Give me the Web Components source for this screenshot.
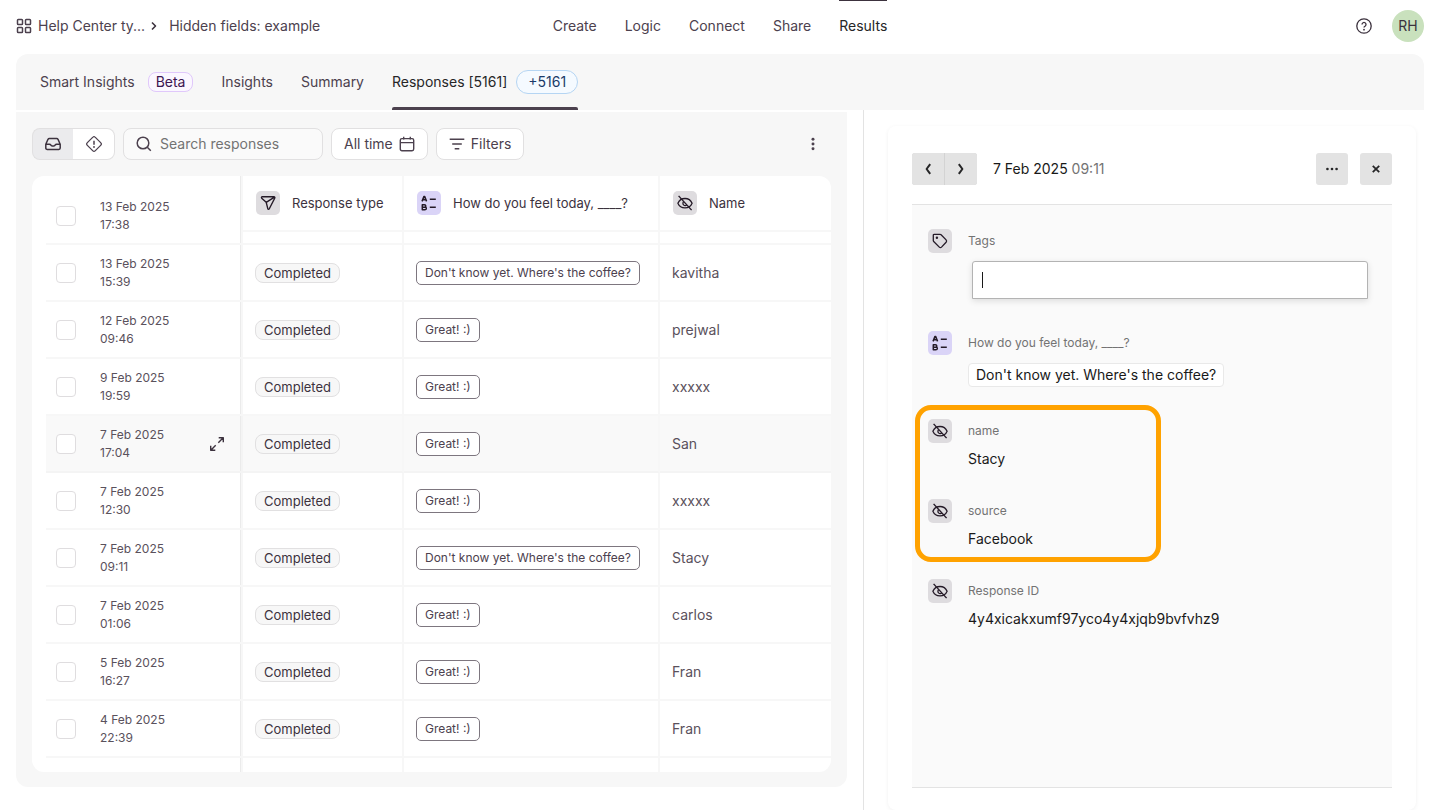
<!DOCTYPE html>
<html lang="en">
<head>
<meta charset="utf-8">
<meta name="viewport" content="width=device-width, initial-scale=1">
<title>Hidden fields: example – Responses</title>
<style>
  body {
    margin: 0;
    background: #fff;
    color: #5a515c;
    font: 14px/20px Inter, "Liberation Sans", sans-serif;
  }
</style>
</head>
<body>
<results-page></results-page>

<script>
const ICONS = {
  grid: '<g stroke-width="1.5"><rect x="1.5" y="1.5" width="5" height="5" rx=".8"/><rect x="9.5" y="1.5" width="5" height="5" rx=".8"/><rect x="1.5" y="9.5" width="5" height="5" rx=".8"/><rect x="9.5" y="9.5" width="5" height="5" rx=".8"/></g>',
  crumb: '<path d="M7 4.500 10.500 8 7 11.500" stroke-width="1.600"/>',
  help: '<circle cx="8" cy="8" r="7.200" stroke-width="1.300"/><path d="M6 6.400a2 2 0 1 1 3 1.800c-.7.4-1 .7-1 1.400" stroke-width="1.300"/><circle cx="8" cy="11.700" r=".9" fill="currentColor" stroke="none"/>',
  inbox: '<path d="M.8 8.200 3 3.300c.3-.6.7-.8 1.300-.8h7.400c.6 0 1 .2 1.300.8l2.200 4.900v3.800c0 .9-.5 1.400-1.400 1.400H2.200c-.9 0-1.400-.5-1.400-1.400zM.8 8.200h3.700c.7 0 1 .3 1.300.8.3.6.6.9 1.300.9h1.800c.7 0 1-.3 1.300-.9.3-.5.6-.8 1.300-.8h3.700" stroke-width="1.500"/>',
  spam: '<path d="M6.900 1.100a1.500 1.500 0 0 1 2.200 0l5.800 5.800a1.500 1.500 0 0 1 0 2.200l-5.800 5.800a1.500 1.500 0 0 1-2.200 0L1.100 9.100a1.500 1.500 0 0 1 0-2.200z" stroke-width="1.300"/><path d="M8 4.700v4" stroke-width="1.500"/><circle cx="8" cy="11" r=".9" fill="currentColor" stroke="none"/>',
  search: '<circle cx="7" cy="7" r="5.800" stroke-width="1.500"/><path d="m11.300 11.300 3.500 3.500" stroke-width="1.500"/>',
  calendar: '<rect x="1.300" y="2.600" width="13.400" height="12.100" rx="1.600" stroke-width="1.400"/><path d="M1.300 6.600h13.400M4.700.8v2.800M11.300.8v2.800" stroke-width="1.400"/>',
  filter: '<path d="M.7 3.200h14.600M3.200 8h9.600M5.700 12.800h4.600" stroke-width="1.500"/>',
  kebab: '<g fill="currentColor" stroke="none"><circle cx="8" cy="2.500" r="1.700"/><circle cx="8" cy="8" r="1.700"/><circle cx="8" cy="13.500" r="1.700"/></g>',
  send: '<path d="M1.700 3.200c-.5-.7-.2-1.400.6-1.400h11.600c.9 0 1.200.7.8 1.400L9.300 13.800c-.4.8-1.200.7-1.500-.1L6.200 7.300zM6.200 7.300l7.900-5" stroke-width="1.400"/>',
  choice: '<g stroke-width="1.500"><path d="m1 6.400 2-5h.6l2 5M1.800 4.700h3M1.300 9.700v5h2.500c2 0 2-2.500.2-2.500H1.500h2c1.800 0 1.700-2.500-.1-2.500z"/><path d="M8.800 4.200h6M8.800 12.200h6"/></g>',
  hidden: '<path d="M.9 8.200C3.600 1.900 12.400 1.900 15.100 8.200 12.400 14.500 3.600 14.500.9 8.200z" stroke-width="1.300"/><path d="M6.700 6.600a2.300 2.300 0 1 0 3.200 3.300" stroke-width="1.300"/><path d="m1.600.9 13 14.200" stroke-width="1.400"/>',
  tag: '<path d="M1.300 2.300c0-.6.4-1 1-1h5.800c.4 0 .7.1 1 .4l5 5.200c.7.8.7 1.500 0 2.300l-4.600 4.900c-.7.7-1.500.7-2.200 0L1.700 8.500c-.3-.3-.4-.6-.4-1z" stroke-width="1.300"/><circle cx="4.900" cy="4.800" r="1.200" fill="currentColor" stroke="none"/>',
  expand: '<path d="M9.300 6.700 13.700 2.300M9.700 1.700h4.600v4.600M6.700 9.300 2.300 13.700M1.700 9.700v4.600h4.600" stroke-width="1.400"/>',
  prev: '<path d="M10.200 3.200 6.600 8l3.600 4.800" stroke-width="2"/>',
  next: '<path d="M5.800 3.200 9.400 8l-3.600 4.800" stroke-width="2"/>',
  dots: '<g fill="currentColor" stroke="none"><circle cx="2.800" cy="8" r="1.500"/><circle cx="8" cy="8" r="1.500"/><circle cx="13.200" cy="8" r="1.500"/></g>',
  close: '<path d="m4.300 4.300 7.400 7.400M11.700 4.300l-7.400 7.400" stroke-width="2"/>'
};

/* Base class: renders a template string into an open shadow root. */
class Base extends HTMLElement {
  constructor() { super(); this.attachShadow({ mode: 'open' }); }
  connectedCallback() {
    this.shadowRoot.innerHTML = '<style>*{box-sizing:border-box}' + this.styles() + '</style>' + this.view();
  }
}

customElements.define('ui-icon', class extends Base {
  styles() { return ':host{display:block;flex:none;width:16px;height:16px}svg{display:block;width:100%;height:100%;overflow:visible}'; }
  view() { return `<svg viewBox="0 0 16 16" fill="none" stroke="currentColor" stroke-linejoin="round" aria-hidden="true">${ICONS[this.getAttribute('name')]}</svg>`; }
});

/* Rounded square that holds the icon of a field type. */
customElements.define('type-badge', class extends Base {
  styles() { return `:host{display:flex;flex:none;align-items:center;justify-content:center;width:24px;height:24px;border-radius:5px;background:#dedcdf;color:#241a27}
    :host([name=choice]){background:#dad4f7}`; }
  view() { return `<ui-icon name="${this.getAttribute('name')}"></ui-icon>`; }
});

customElements.define('app-header', class extends Base {
  styles() { return `
    :host{display:grid;grid-template-columns:1fr auto 1fr;align-items:start;height:54px;padding:0 16px}
    a{color:#4c414e;text-decoration:none}
    .crumbs{display:flex;align-items:center;height:52px}
    .crumbs a:first-child{display:flex;align-items:center;gap:6px}
    .crumbs>ui-icon{margin-right:8px;color:#3c323e}
    nav.main{display:flex;gap:28px}
    nav.main a{height:52px;line-height:52px}
    nav.main a[aria-current]{color:#262627;box-shadow:inset 0 1px #3c323e}
    .tools{display:flex;justify-content:flex-end;align-items:center;gap:20px;height:52px}
    button{border:0;padding:0;font:inherit;cursor:pointer;background:none;color:#3c323e}
    .user{width:32px;height:32px;border-radius:50%;background:#c9e1bd;color:#3c323e}`; }
  view() { return `
    <nav class="crumbs" aria-label="Breadcrumb">
      <a href="#workspace"><ui-icon name="grid"></ui-icon>Help Center ty...</a>
      <ui-icon name="crumb"></ui-icon>
      <a href="#form">Hidden fields: example</a>
    </nav>
    <nav class="main" aria-label="Form">
      <a href="#create">Create</a><a href="#logic">Logic</a><a href="#connect">Connect</a><a href="#share">Share</a><a href="#results" aria-current="page">Results</a>
    </nav>
    <div class="tools">
      <button aria-label="Help"><ui-icon name="help"></ui-icon></button>
      <button class="user">RH</button>
    </div>`; }
});

customElements.define('result-tabs', class extends Base {
  styles() { return `
    :host{display:flex;gap:28px;height:56px;margin:0 16px;padding:0 24px;background:#f7f7f7;border-radius:12px 12px 0 0}
    a{display:flex;align-items:center;color:#4c414e;text-decoration:none;position:relative}
    a[aria-current]{color:#262627}
    a[aria-current]::after{content:"";position:absolute;left:0;right:0;bottom:0;height:3px;border-radius:2px 2px 0 0;background:#4c414e}
    span{border:1px solid #e0c8fb;background:#fbf7ff;color:#3d1652;border-radius:8px;margin-left:13px;padding:0 7px;line-height:18px}
    span.new{border-color:#b5d5f3;background:#f5faff;color:#1b3a68;border-radius:12px;margin-left:9px;padding:0 11px;line-height:22px}`; }
  view() { return `
    <a href="#smart">Smart Insights <span>Beta</span></a>
    <a href="#insights">Insights</a>
    <a href="#summary">Summary</a>
    <a href="#responses" aria-current="page">Responses [5161] <span class="new">+5161</span></a>`; }
});

customElements.define('response-toolbar', class extends Base {
  styles() { return `
    :host{display:flex;gap:8px;height:32px}
    button,.search{display:flex;align-items:center;font:inherit;color:#4c414e;border:1px solid #e1e0e1;border-radius:8px;background:#fff;margin:0}
    button{cursor:pointer;padding:0 12px;gap:6px}
    .toggle{display:flex}
    .toggle button{width:42px;justify-content:center;padding:0}
    .toggle button:first-child{border-radius:8px 0 0 8px;border-right:0;background:#ebebed;width:41px;color:#3c323e}
    .toggle button:last-child{border-radius:0 8px 8px 0;border-left:0}
    .search{width:200px;padding:0 12px;gap:8px;background:#fafafa}
    input{min-width:0;flex:1;border:0;outline:0;background:none;font:inherit;color:inherit;padding:0}
    input::placeholder{color:#737373;opacity:1}
    .more{margin-left:auto;margin-right:8px;border:0;background:none;padding:0;width:20px;justify-content:center}
    .more ui-icon{width:14px;height:14px}`; }
  view() { return `
    <div class="toggle"><button aria-label="Inbox"><ui-icon name="inbox"></ui-icon></button><button aria-label="Spam"><ui-icon name="spam"></ui-icon></button></div>
    <label class="search"><ui-icon name="search"></ui-icon><input type="text" placeholder="Search responses" aria-label="Search responses"></label>
    <button>All time <ui-icon name="calendar"></ui-icon></button>
    <button><ui-icon name="filter"></ui-icon>Filters</button>
    <button class="more" aria-label="More options"><ui-icon name="kebab"></ui-icon></button>`; }
});

/* Outlined label for an answer; kind="status" is the softer grey version. */
customElements.define('answer-chip', class extends Base {
  styles() { return `
    :host{display:inline-block;vertical-align:middle;border:1px solid #7d767f;border-radius:5px;background:#fff;color:#4c414e;padding:0 8px;font-size:12px;line-height:22px;white-space:nowrap}
    :host([kind=status]){border-color:#e1e0e1;border-radius:8px;background:#f7f7f7;color:#3c323e;font-size:13px;line-height:18px}
    :host([kind=detail]){border-color:#e9e9e9;border-radius:4px;color:#191919;padding:0 7px;font-size:14px}`; }
  view() { return '<slot></slot>'; }
});

const COFFEE = "Don't know yet. Where's the coffee?";
const GREAT = 'Great! :)';
const ROWS = [
  ['13 Feb 2025', '15:39', COFFEE, 'kavitha'],
  ['12 Feb 2025', '09:46', GREAT, 'prejwal'],
  ['9 Feb 2025', '19:59', GREAT, 'xxxxx'],
  ['7 Feb 2025', '17:04', GREAT, 'San'],
  ['7 Feb 2025', '12:30', GREAT, 'xxxxx'],
  ['7 Feb 2025', '09:11', COFFEE, 'Stacy'],
  ['7 Feb 2025', '01:06', GREAT, 'carlos'],
  ['5 Feb 2025', '16:27', GREAT, 'Fran'],
  ['4 Feb 2025', '22:39', GREAT, 'Fran']
];

customElements.define('response-table', class extends Base {
  styles() { return `
    :host{display:block;background:#fff;border-radius:12px;padding-left:14px;overflow:hidden}
    table{width:100%;table-layout:fixed;border-collapse:separate;border-spacing:0}
    .date{width:197px}.type{width:161px}.question{width:256px}
    th,td{height:57px;padding:0 12px;text-align:left;font-weight:400;border-bottom:2px solid #f7f7f7}
    th{height:56px;padding:0 13px;color:#3c323e}
    td+td:not(:last-child),th:not(:last-child){border-right:2px solid #f7f7f7}
    td.when,.end td:first-child{padding:0 16px 0 10px;border-right:2px solid #f7f7f7;box-shadow:inset -1px 0 #ebebeb}
    thead td.when{padding-top:12px}
    .gap td{height:13px;padding:0}
    .gap td:not(:last-child){border-right:2px solid #f7f7f7}
    .end td{height:14px;padding:0;border-bottom:0}
    .hover td{background:#f9f9f9;border-color:#f4f4f4}
    .row,.head{display:flex;align-items:center}
    .row{gap:24px;font-size:12px;line-height:18px}
    .head{gap:12px;font-size:13px}
    .expand{margin-left:auto;border:0;background:none;padding:0;color:#3c323e}
    input{appearance:none;flex:none;width:20px;height:20px;margin:0;border:1px solid #dfdddf;border-radius:4px;background:#fff}`; }
  when(date, time, open) {
    return `<div class="row"><input type="checkbox" aria-label="Select response of ${date} ${time}"><div>${date}<div>${time}</div></div>${open ? '<button class="expand" aria-label="Open response"><ui-icon name="expand"></ui-icon></button>' : ''}</div>`;
  }
  view() { return `
    <table>
      <colgroup><col class="date"><col class="type"><col class="question"><col></colgroup>
      <thead>
        <tr><td class="when" rowspan="2">${this.when('13 Feb 2025', '17:38')}</td>
          <th scope="col"><div class="head"><type-badge name="send"></type-badge>Response type</div></th>
          <th scope="col"><div class="head"><type-badge name="choice"></type-badge>How do you feel today, ____?</div></th>
          <th scope="col"><div class="head"><type-badge name="hidden"></type-badge>Name</div></th></tr>
        <tr class="gap"><td></td><td></td><td></td></tr>
      </thead>
      <tbody>
        ${ROWS.map(([date, time, feel, name]) => `<tr${time === '17:04' ? ' class="hover"' : ''}>
          <td class="when">${this.when(date, time, time === '17:04')}</td>
          <td><answer-chip kind="status">Completed</answer-chip></td>
          <td><answer-chip>${feel}</answer-chip></td>
          <td>${name}</td></tr>`).join('')}
        <tr class="end"><td></td><td></td><td></td><td></td></tr>
      </tbody>
    </table>`; }
});

/* One field of the open response: badge, label and slotted value. */
customElements.define('response-field', class extends Base {
  styles() { return `
    :host{display:grid;grid-template-columns:24px minmax(0,1fr);column-gap:16px;row-gap:8px;align-items:center}
    .label{font-size:12px;color:#737373}
    .value{grid-column:2;color:#191919;line-height:16px;display:flex;flex-direction:column;align-items:flex-start}
    ::slotted(tag-input){align-self:stretch}`; }
  view() { return `<type-badge name="${this.getAttribute('icon')}"></type-badge><div class="label">${this.getAttribute('label')}</div><div class="value"><slot></slot></div>`; }
});

customElements.define('tag-input', class extends Base {
  styles() { return `
    :host{display:block;padding-left:4px}
    .box{display:flex;align-items:center;height:38px;padding:0 9px;background:#fff;border:1px solid #b3b3b3;border-radius:3px 3px 0 0;box-shadow:0 2px 6px rgba(0,0,0,.12)}
    i{width:1px;height:16px;background:#191919}
    input{flex:1;min-width:0;border:0;outline:0;background:none;font:inherit;padding:0 4px;caret-color:transparent}`; }
  view() { return '<div class="box"><i></i><input type="text" aria-label="Tags"></div>'; }
});

customElements.define('highlight-group', class extends Base {
  styles() { return `
    :host{display:grid;gap:32px;position:relative;width:232px}
    :host::after{content:"";position:absolute;inset:-14px -1px -15px -13px;border:5px solid #ffa200;border-radius:16px;pointer-events:none}`; }
  view() { return '<slot></slot>'; }
});

customElements.define('response-detail', class extends Base {
  styles() { return `
    :host{display:flex;flex-direction:column;border-radius:8px;padding:27px 24px 22px;box-shadow:0 1px 4px rgba(0,0,0,.06)}
    header{display:flex;align-items:center;gap:12px;margin-bottom:19px;color:#191919}
    button{display:flex;align-items:center;justify-content:center;width:32px;height:32px;padding:0;border:0;border-radius:3px;background:#e3e3e3;color:#262627;cursor:pointer}
    button ui-icon{width:14px;height:14px}
    .pager{display:flex;gap:1px;background:#d3d3d3;border-radius:3px}
    .pager button:first-child{border-radius:3px 0 0 3px}
    .pager button:last-child{border-radius:0 3px 3px 0}
    .pager ui-icon{width:16px;height:16px}
    h2{flex:1;margin:0 4px;font-size:14px;font-weight:400}
    time{color:#737373}
    .body{flex:1;display:flex;flex-direction:column;gap:32px;padding:24px 24px 24px 16px;background:#fafafa;border-top:1px solid #e3e3e3;border-bottom:1px solid #e3e3e3}`; }
  view() { return `
    <header>
      <div class="pager"><button aria-label="Previous response"><ui-icon name="prev"></ui-icon></button><button aria-label="Next response"><ui-icon name="next"></ui-icon></button></div>
      <h2>7 Feb 2025 <time>09:11</time></h2>
      <button aria-label="More"><ui-icon name="dots"></ui-icon></button>
      <button aria-label="Close"><ui-icon name="close"></ui-icon></button>
    </header>
    <div class="body">
      <response-field icon="tag" label="Tags"><tag-input></tag-input></response-field>
      <response-field icon="choice" label="How do you feel today, ____?"><answer-chip kind="detail">${COFFEE}</answer-chip></response-field>
      <highlight-group>
        <response-field icon="hidden" label="name">Stacy</response-field>
        <response-field icon="hidden" label="source">Facebook</response-field>
      </highlight-group>
      <response-field icon="hidden" label="Response ID">4y4xicakxumf97yco4y4xjqb9bvfvhz9</response-field>
    </div>`; }
});

customElements.define('results-page', class extends Base {
  styles() { return `
    :host{display:flex;flex-direction:column;min-height:100vh}
    main{flex:1;display:grid;grid-template-columns:minmax(0,3fr) minmax(0,2fr)}
    .list{padding:2px 16px 0;border-right:1px solid #e3e3e3}
    .panel{display:grid;gap:16px;padding:16px 16px 15px;background:#f7f7f7;border-radius:0 0 12px 12px}
    .side{display:flex;padding:16px 24px 0}
    response-detail{flex:1}`; }
  view() { return `
    <app-header></app-header>
    <result-tabs></result-tabs>
    <main>
      <section class="list"><div class="panel"><response-toolbar></response-toolbar><response-table></response-table></div></section>
      <aside class="side"><response-detail></response-detail></aside>
    </main>`; }
});
</script>
</body>
</html>
